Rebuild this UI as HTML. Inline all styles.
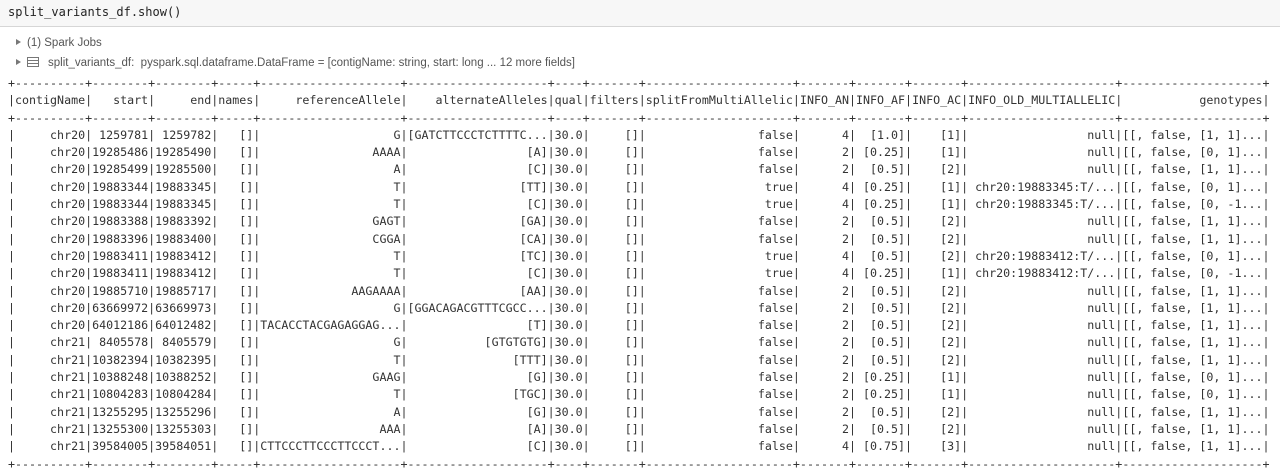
<!DOCTYPE html>
<html><head><meta charset="utf-8"><style>
body{margin:0;width:1280px;height:470px;background:#fff;overflow:hidden;position:relative;font-family:"Liberation Sans",sans-serif}
.cmd{position:absolute;left:0;top:0;width:1280px;height:26px;background:#f7f7f7;border-bottom:1px solid #d6d6d6}
.cmd span{position:absolute;left:8px;top:5px;font:12px "DejaVu Sans Mono",monospace;color:#222}
.l{position:absolute;font-size:11.5px;color:#555;white-space:nowrap}
.tri{display:inline-block;width:0;height:0;border-left:5px solid #777;border-top:3.5px solid transparent;border-bottom:3.5px solid transparent;margin-right:6px;vertical-align:1px}
.ic{display:inline-block;width:10px;height:8px;border:1px solid #777;margin-right:9px;vertical-align:-1px;background:linear-gradient(#777,#777) 0 2px/100% 1px no-repeat,linear-gradient(#777,#777) 0 5px/100% 1px no-repeat}
pre{position:absolute;left:8px;top:75px;margin:0;font:11.65px/17.3px "DejaVu Sans Mono",monospace;color:#333}
</style></head><body>
<div class="cmd"><span>split_variants_df.show()</span></div>
<div class="l" style="left:16px;top:37px"><i class="tri"></i>(1) Spark Jobs</div>
<div class="l" style="left:16px;top:57px"><i class="tri"></i><i class="ic"></i>split_variants_df:&nbsp; pyspark.sql.dataframe.DataFrame = [contigName: string, start: long ... 12 more fields]</div>
<pre>+----------+--------+--------+-----+--------------------+--------------------+----+-------+---------------------+-------+-------+-------+---------------------+--------------------+
|contigName|   start|     end|names|     referenceAllele|    alternateAlleles|qual|filters|splitFromMultiAllelic|INFO_AN|INFO_AF|INFO_AC|INFO_OLD_MULTIALLELIC|           genotypes|
+----------+--------+--------+-----+--------------------+--------------------+----+-------+---------------------+-------+-------+-------+---------------------+--------------------+
|     chr20| 1259781| 1259782|   []|                   G|[GATCTTCCCTCTTTTC...|30.0|     []|                false|      4|  [1.0]|    [1]|                 null|[[, false, [1, 1]...|
|     chr20|19285486|19285490|   []|                AAAA|                 [A]|30.0|     []|                false|      2| [0.25]|    [1]|                 null|[[, false, [0, 1]...|
|     chr20|19285499|19285500|   []|                   A|                 [C]|30.0|     []|                false|      2|  [0.5]|    [2]|                 null|[[, false, [1, 1]...|
|     chr20|19883344|19883345|   []|                   T|                [TT]|30.0|     []|                 true|      4| [0.25]|    [1]| chr20:19883345:T/...|[[, false, [0, 1]...|
|     chr20|19883344|19883345|   []|                   T|                 [C]|30.0|     []|                 true|      4| [0.25]|    [1]| chr20:19883345:T/...|[[, false, [0, -1...|
|     chr20|19883388|19883392|   []|                GAGT|                [GA]|30.0|     []|                false|      2|  [0.5]|    [2]|                 null|[[, false, [1, 1]...|
|     chr20|19883396|19883400|   []|                CGGA|                [CA]|30.0|     []|                false|      2|  [0.5]|    [2]|                 null|[[, false, [1, 1]...|
|     chr20|19883411|19883412|   []|                   T|                [TC]|30.0|     []|                 true|      4|  [0.5]|    [2]| chr20:19883412:T/...|[[, false, [0, 1]...|
|     chr20|19883411|19883412|   []|                   T|                 [C]|30.0|     []|                 true|      4| [0.25]|    [1]| chr20:19883412:T/...|[[, false, [0, -1...|
|     chr20|19885710|19885717|   []|             AAGAAAA|                [AA]|30.0|     []|                false|      2|  [0.5]|    [2]|                 null|[[, false, [1, 1]...|
|     chr20|63669972|63669973|   []|                   G|[GGACAGACGTTTCGCC...|30.0|     []|                false|      2|  [0.5]|    [2]|                 null|[[, false, [1, 1]...|
|     chr20|64012186|64012482|   []|TACACCTACGAGAGGAG...|                 [T]|30.0|     []|                false|      2|  [0.5]|    [2]|                 null|[[, false, [1, 1]...|
|     chr21| 8405578| 8405579|   []|                   G|           [GTGTGTG]|30.0|     []|                false|      2|  [0.5]|    [2]|                 null|[[, false, [1, 1]...|
|     chr21|10382394|10382395|   []|                   T|               [TTT]|30.0|     []|                false|      2|  [0.5]|    [2]|                 null|[[, false, [1, 1]...|
|     chr21|10388248|10388252|   []|                GAAG|                 [G]|30.0|     []|                false|      2| [0.25]|    [1]|                 null|[[, false, [0, 1]...|
|     chr21|10804283|10804284|   []|                   T|               [TGC]|30.0|     []|                false|      2| [0.25]|    [1]|                 null|[[, false, [0, 1]...|
|     chr21|13255295|13255296|   []|                   A|                 [G]|30.0|     []|                false|      2|  [0.5]|    [2]|                 null|[[, false, [1, 1]...|
|     chr21|13255300|13255303|   []|                 AAA|                 [A]|30.0|     []|                false|      2|  [0.5]|    [2]|                 null|[[, false, [1, 1]...|
|     chr21|39584005|39584051|   []|CTTCCCTTCCCTTCCCT...|                 [C]|30.0|     []|                false|      4| [0.75]|    [3]|                 null|[[, false, [1, 1]...|
+----------+--------+--------+-----+--------------------+--------------------+----+-------+---------------------+-------+-------+-------+---------------------+--------------------+</pre>
</body></html>
